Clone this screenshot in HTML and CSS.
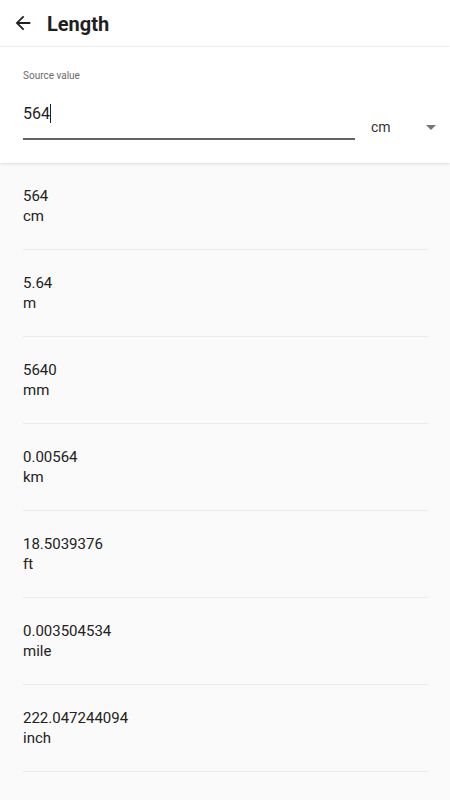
FILE: index.html
```html
<!DOCTYPE html>
<html lang="en">
<head>
    <meta charset="UTF-8">
    <meta name="viewport" content="width=device-width, initial-scale=1.0">
    <title>Length</title>
    <link rel="stylesheet" href="styles.css">
</head>
<body>
    <header class="topbar">
        <svg class="back" width="22" height="22" viewBox="0 0 24 24">
            <path d="M20 11H7.83l5.59-5.59L12 4l-8 8 8 8 1.41-1.41L7.83 13H20v-2z" fill="#212121"/>
        </svg>
        <h1>Length</h1>
    </header>

    <!-- Source value -->
    <section class="source">
        <div class="field">
            <label>Source value</label>
            <div class="input">564<span class="caret"></span></div>
        </div>
        <div class="unit-select">
            <span>cm</span>
            <svg width="10" height="5" viewBox="0 0 10 5"><path d="M0 0h10L5 5z" fill="#757575"/></svg>
        </div>
    </section>

    <!-- Results -->
    <div class="results">
        <div class="result"><div class="value">564</div><div class="unit">cm</div></div>
        <div class="result"><div class="value">5.64</div><div class="unit">m</div></div>
        <div class="result"><div class="value">5640</div><div class="unit">mm</div></div>
        <div class="result"><div class="value">0.00564</div><div class="unit">km</div></div>
        <div class="result"><div class="value">18.5039376</div><div class="unit">ft</div></div>
        <div class="result"><div class="value">0.003504534</div><div class="unit">mile</div></div>
        <div class="result"><div class="value">222.047244094</div><div class="unit">inch</div></div>
    </div>
</body>
</html>
```

FILE: styles.css
```css
body {
    margin: 0;
    font-family: Roboto, "Noto Sans", Arial, sans-serif;
    color: #212121;
    background-color: #fafafa;
    overflow: hidden;
}
.topbar {
    height: 47px;
    display: flex;
    align-items: center;
    padding-left: 12px;
    background: #fff;
    border-bottom: 1px solid #f2f2f2;
    box-sizing: border-box;
}
.back {
    margin-right: 13px;
}
.topbar h1 {
    margin: 1px 0 0;
    font-size: 20px;
    font-weight: 700;
    color: #1f1f1f;
}
.source {
    background: #fff;
    display: flex;
    align-items: flex-end;
    padding: 22px 14px 23px 23px;
    box-shadow: 0 1px 3px rgba(0, 0, 0, 0.12);
    position: relative;
}
.field {
    width: 332px;
}
.field label {
    display: block;
    font-size: 10px;
    color: #6b6b6b;
    line-height: 14px;
}
.input {
    font-size: 16px;
    line-height: 22px;
    margin-top: 20px;
    padding-bottom: 13px;
    border-bottom: 2px solid #5f6466;
    color: #1f1f1f;
}
.caret {
    display: inline-block;
    width: 1px;
    height: 19px;
    background: #1f1f1f;
    vertical-align: -4px;
}
.unit-select {
    flex: 1;
    display: flex;
    align-items: center;
    justify-content: space-between;
    margin-left: 16px;
    padding-bottom: 4px;
    line-height: 18px;
    font-size: 14px;
    color: #333;
}
.results {
    padding: 0 22px 0 23px;
}
.result {
    padding: 23px 0;
    border-bottom: 1px solid #ebebeb;
    font-size: 15px;
    line-height: 20px;
    color: #222;
}
```
